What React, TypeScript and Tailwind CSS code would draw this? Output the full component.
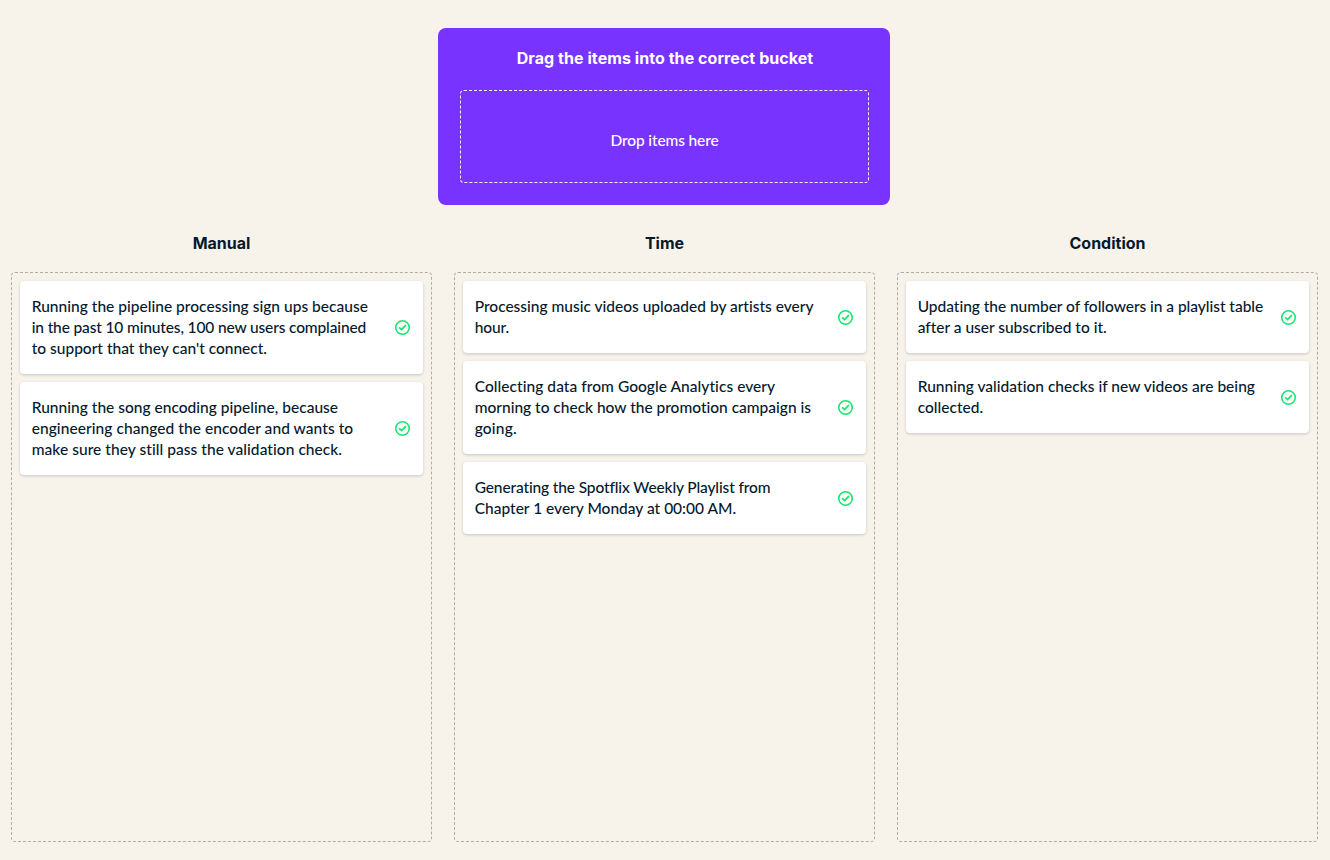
type Line = { text: string; tracking: string };

const columns: { title: string; items: Line[][] }[] = [
  {
    title: "Manual",
    items: [
      [
        { text: "Running the pipeline processing sign ups because", tracking: "tracking-[0.02px]" },
        { text: "in the past 10 minutes, 100 new users complained", tracking: "tracking-[-0.14px]" },
        { text: "to support that they can't connect.", tracking: "tracking-[0.005px]" },
      ],
      [
        { text: "Running the song encoding pipeline, because", tracking: "tracking-[0.018px]" },
        { text: "engineering changed the encoder and wants to", tracking: "tracking-[0.065px]" },
        { text: "make sure they still pass the validation check.", tracking: "tracking-[0.053px]" },
      ],
    ],
  },
  {
    title: "Time",
    items: [
      [
        { text: "Processing music videos uploaded by artists every", tracking: "tracking-[0px]" },
        { text: "hour.", tracking: "tracking-[-0.1px]" },
      ],
      [
        { text: "Collecting data from Google Analytics every", tracking: "tracking-[0.053px]" },
        { text: "morning to check how the promotion campaign is", tracking: "tracking-[-0.005px]" },
        { text: "going.", tracking: "tracking-[0.2px]" },
      ],
      [
        { text: "Generating the Spotflix Weekly Playlist from", tracking: "tracking-[-0.13px]" },
        { text: "Chapter 1 every Monday at 00:00 AM.", tracking: "tracking-[0.005px]" },
      ],
    ],
  },
  {
    title: "Condition",
    items: [
      [
        { text: "Updating the number of followers in a playlist table", tracking: "tracking-[-0.035px]" },
        { text: "after a user subscribed to it.", tracking: "tracking-[-0.01px]" },
      ],
      [
        { text: "Running validation checks if new videos are being", tracking: "tracking-[0.023px]" },
        { text: "collected.", tracking: "tracking-[0.02px]" },
      ],
    ],
  },
];

function CheckIcon() {
  return (
    <svg className="size-[15px] shrink-0 overflow-visible" viewBox="0 0 15 15" fill="none" stroke="#1be56f">
      <circle cx="7.5" cy="7.5" r="6.75" strokeWidth="1.6" />
      <path d="M4.1 7.3 6.6 9.6 10.9 5.1" strokeWidth="1.8" />
    </svg>
  );
}

function Card({ lines }: { lines: Line[] }) {
  return (
    <div className="flex items-center justify-between rounded-[4px] bg-white py-[15px] pr-[13px] pl-[11.7px] shadow-[0_1px_3px_rgba(5,25,45,0.2)]">
      <p className="text-[15.5px] leading-[21px] font-medium whitespace-nowrap">
        {lines.map((line) => (
          <span key={line.text} className={`block ${line.tracking}`}>
            {line.text}
          </span>
        ))}
      </p>
      <CheckIcon />
    </div>
  );
}

export default function App() {
  return (
    <div className="flex h-[860px] w-[1330px] flex-col items-center overflow-hidden bg-[#f7f3eb] pt-[28px] font-['Lato',sans-serif] text-[#05192d] [font-variant-ligatures:none]">
      <section className="mr-[2px] flex h-[177px] w-[452px] flex-col rounded-[8px] bg-[#7933ff] px-[22px] pt-[20px] pb-[22px] text-white">
        <h1 className="pl-[2px] text-center font-['Inter',sans-serif] text-[16px] leading-[21px] font-bold tracking-[0.06px]">
          Drag the items into the correct bucket
        </h1>
        <div className="mt-[21px] flex w-[409px] flex-1 items-center justify-center rounded-[4px] border border-dashed border-white pt-[8px] text-[15.5px] leading-[21px] font-medium tracking-[-0.13px]">
          Drop items here
        </div>
      </section>
      <main className="mt-[28px] flex w-full gap-[22px] pl-[11px]">
        {columns.map((column) => (
          <section key={column.title} className="w-[421px]">
            <h2 className="text-center font-['Inter',sans-serif] text-[16px] leading-[21px] font-bold">
              {column.title}
            </h2>
            <div className="mt-[18px] flex h-[570px] flex-col gap-[8px] rounded-[4px] border border-dashed border-[#b0aca7] p-[8px]">
              {column.items.map((lines) => (
                <Card key={lines[0].text} lines={lines} />
              ))}
            </div>
          </section>
        ))}
      </main>
    </div>
  );
}
